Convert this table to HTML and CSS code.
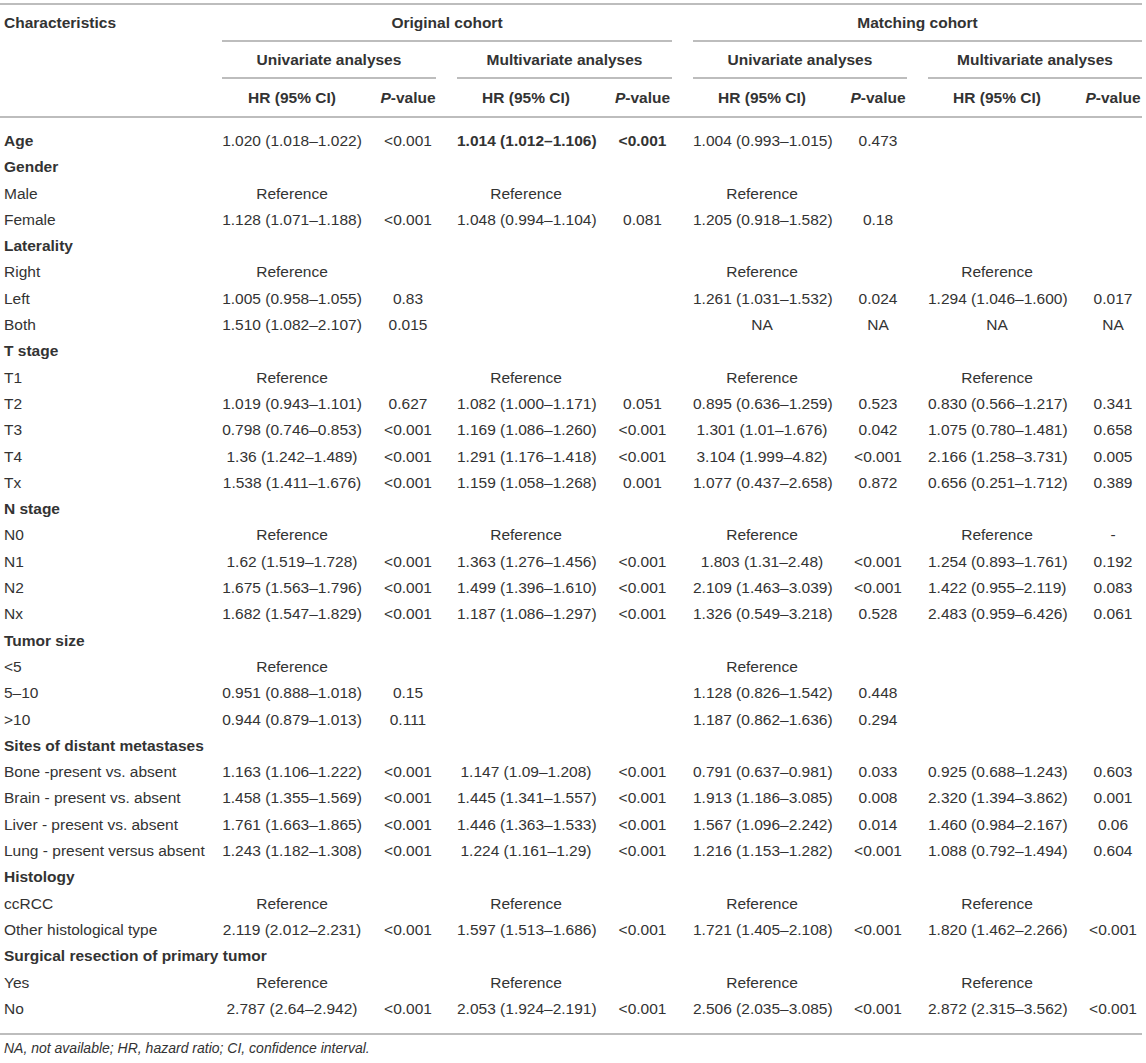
FILE: index.html
```html
<!DOCTYPE html>
<html>
<head>
<meta charset="utf-8">
<link rel="stylesheet" href="styles.css">
</head>
<body>
<div class="wrap">
<table class="tbl">
  <colgroup>
    <col class="c-label">
    <col class="c-hr1"><col class="c-p1"><col class="c-sp">
    <col class="c-hr2"><col class="c-p2"><col class="c-sp">
    <col class="c-hr3"><col class="c-p3"><col class="c-sp">
    <col class="c-hr4"><col class="c-p4">
  </colgroup>
  <thead>
    <tr class="h1">
      <th class="lbl line" rowspan="3">Characteristics</th>
      <th class="line" colspan="5">Original cohort</th>
      <th class="sp"></th>
      <th class="line" colspan="5">Matching cohort</th>
    </tr>
    <tr class="h2">
      <th class="line" colspan="2">Univariate analyses</th>
      <th class="sp"></th>
      <th class="line" colspan="2">Multivariate analyses</th>
      <th class="sp"></th>
      <th class="line" colspan="2">Univariate analyses</th>
      <th class="sp"></th>
      <th class="line" colspan="2">Multivariate analyses</th>
    </tr>
    <tr class="h3">
      <th class="line">HR (95% CI)</th><th class="line p"><i>P</i>-value</th><th class="line sp"></th>
      <th class="line">HR (95% CI)</th><th class="line p"><i>P</i>-value</th><th class="line sp"></th>
      <th class="line">HR (95% CI)</th><th class="line p"><i>P</i>-value</th><th class="line sp"></th>
      <th class="line">HR (95% CI)</th><th class="line p"><i>P</i>-value</th>
    </tr>
  </thead>
  <tbody>
    <tr class="first"><td class="lbl b">Age</td><td>1.020 (1.018–1.022)</td><td class="p">&lt;0.001</td><td></td><td class="b">1.014 (1.012–1.106)</td><td class="p b">&lt;0.001</td><td></td><td>1.004 (0.993–1.015)</td><td class="p">0.473</td><td></td><td></td><td class="p"></td></tr>
    <tr><td class="lbl b">Gender</td><td></td><td class="p"></td><td></td><td></td><td class="p"></td><td></td><td></td><td class="p"></td><td></td><td></td><td class="p"></td></tr>
    <tr><td class="lbl">Male</td><td>Reference</td><td class="p"></td><td></td><td>Reference</td><td class="p"></td><td></td><td>Reference</td><td class="p"></td><td></td><td></td><td class="p"></td></tr>
    <tr><td class="lbl">Female</td><td>1.128 (1.071–1.188)</td><td class="p">&lt;0.001</td><td></td><td>1.048 (0.994–1.104)</td><td class="p">0.081</td><td></td><td>1.205 (0.918–1.582)</td><td class="p">0.18</td><td></td><td></td><td class="p"></td></tr>
    <tr><td class="lbl b">Laterality</td><td></td><td class="p"></td><td></td><td></td><td class="p"></td><td></td><td></td><td class="p"></td><td></td><td></td><td class="p"></td></tr>
    <tr><td class="lbl">Right</td><td>Reference</td><td class="p"></td><td></td><td></td><td class="p"></td><td></td><td>Reference</td><td class="p"></td><td></td><td>Reference</td><td class="p"></td></tr>
    <tr><td class="lbl">Left</td><td>1.005 (0.958–1.055)</td><td class="p">0.83</td><td></td><td></td><td class="p"></td><td></td><td>1.261 (1.031–1.532)</td><td class="p">0.024</td><td></td><td>1.294 (1.046–1.600)</td><td class="p">0.017</td></tr>
    <tr><td class="lbl">Both</td><td>1.510 (1.082–2.107)</td><td class="p">0.015</td><td></td><td></td><td class="p"></td><td></td><td>NA</td><td class="p">NA</td><td></td><td>NA</td><td class="p">NA</td></tr>
    <tr><td class="lbl b">T stage</td><td></td><td class="p"></td><td></td><td></td><td class="p"></td><td></td><td></td><td class="p"></td><td></td><td></td><td class="p"></td></tr>
    <tr><td class="lbl">T1</td><td>Reference</td><td class="p"></td><td></td><td>Reference</td><td class="p"></td><td></td><td>Reference</td><td class="p"></td><td></td><td>Reference</td><td class="p"></td></tr>
    <tr><td class="lbl">T2</td><td>1.019 (0.943–1.101)</td><td class="p">0.627</td><td></td><td>1.082 (1.000–1.171)</td><td class="p">0.051</td><td></td><td>0.895 (0.636–1.259)</td><td class="p">0.523</td><td></td><td>0.830 (0.566–1.217)</td><td class="p">0.341</td></tr>
    <tr><td class="lbl">T3</td><td>0.798 (0.746–0.853)</td><td class="p">&lt;0.001</td><td></td><td>1.169 (1.086–1.260)</td><td class="p">&lt;0.001</td><td></td><td>1.301 (1.01–1.676)</td><td class="p">0.042</td><td></td><td>1.075 (0.780–1.481)</td><td class="p">0.658</td></tr>
    <tr><td class="lbl">T4</td><td>1.36 (1.242–1.489)</td><td class="p">&lt;0.001</td><td></td><td>1.291 (1.176–1.418)</td><td class="p">&lt;0.001</td><td></td><td>3.104 (1.999–4.82)</td><td class="p">&lt;0.001</td><td></td><td>2.166 (1.258–3.731)</td><td class="p">0.005</td></tr>
    <tr><td class="lbl">Tx</td><td>1.538 (1.411–1.676)</td><td class="p">&lt;0.001</td><td></td><td>1.159 (1.058–1.268)</td><td class="p">0.001</td><td></td><td>1.077 (0.437–2.658)</td><td class="p">0.872</td><td></td><td>0.656 (0.251–1.712)</td><td class="p">0.389</td></tr>
    <tr><td class="lbl b">N stage</td><td></td><td class="p"></td><td></td><td></td><td class="p"></td><td></td><td></td><td class="p"></td><td></td><td></td><td class="p"></td></tr>
    <tr><td class="lbl">N0</td><td>Reference</td><td class="p"></td><td></td><td>Reference</td><td class="p"></td><td></td><td>Reference</td><td class="p"></td><td></td><td>Reference</td><td class="p">-</td></tr>
    <tr><td class="lbl">N1</td><td>1.62 (1.519–1.728)</td><td class="p">&lt;0.001</td><td></td><td>1.363 (1.276–1.456)</td><td class="p">&lt;0.001</td><td></td><td>1.803 (1.31–2.48)</td><td class="p">&lt;0.001</td><td></td><td>1.254 (0.893–1.761)</td><td class="p">0.192</td></tr>
    <tr><td class="lbl">N2</td><td>1.675 (1.563–1.796)</td><td class="p">&lt;0.001</td><td></td><td>1.499 (1.396–1.610)</td><td class="p">&lt;0.001</td><td></td><td>2.109 (1.463–3.039)</td><td class="p">&lt;0.001</td><td></td><td>1.422 (0.955–2.119)</td><td class="p">0.083</td></tr>
    <tr><td class="lbl">Nx</td><td>1.682 (1.547–1.829)</td><td class="p">&lt;0.001</td><td></td><td>1.187 (1.086–1.297)</td><td class="p">&lt;0.001</td><td></td><td>1.326 (0.549–3.218)</td><td class="p">0.528</td><td></td><td>2.483 (0.959–6.426)</td><td class="p">0.061</td></tr>
    <tr><td class="lbl b">Tumor size</td><td></td><td class="p"></td><td></td><td></td><td class="p"></td><td></td><td></td><td class="p"></td><td></td><td></td><td class="p"></td></tr>
    <tr><td class="lbl">&lt;5</td><td>Reference</td><td class="p"></td><td></td><td></td><td class="p"></td><td></td><td>Reference</td><td class="p"></td><td></td><td></td><td class="p"></td></tr>
    <tr><td class="lbl">5–10</td><td>0.951 (0.888–1.018)</td><td class="p">0.15</td><td></td><td></td><td class="p"></td><td></td><td>1.128 (0.826–1.542)</td><td class="p">0.448</td><td></td><td></td><td class="p"></td></tr>
    <tr><td class="lbl">&gt;10</td><td>0.944 (0.879–1.013)</td><td class="p">0.111</td><td></td><td></td><td class="p"></td><td></td><td>1.187 (0.862–1.636)</td><td class="p">0.294</td><td></td><td></td><td class="p"></td></tr>
    <tr><td class="lbl b">Sites of distant metastases</td><td></td><td class="p"></td><td></td><td></td><td class="p"></td><td></td><td></td><td class="p"></td><td></td><td></td><td class="p"></td></tr>
    <tr><td class="lbl">Bone -present vs. absent</td><td>1.163 (1.106–1.222)</td><td class="p">&lt;0.001</td><td></td><td>1.147 (1.09–1.208)</td><td class="p">&lt;0.001</td><td></td><td>0.791 (0.637–0.981)</td><td class="p">0.033</td><td></td><td>0.925 (0.688–1.243)</td><td class="p">0.603</td></tr>
    <tr><td class="lbl">Brain - present vs. absent</td><td>1.458 (1.355–1.569)</td><td class="p">&lt;0.001</td><td></td><td>1.445 (1.341–1.557)</td><td class="p">&lt;0.001</td><td></td><td>1.913 (1.186–3.085)</td><td class="p">0.008</td><td></td><td>2.320 (1.394–3.862)</td><td class="p">0.001</td></tr>
    <tr><td class="lbl">Liver - present vs. absent</td><td>1.761 (1.663–1.865)</td><td class="p">&lt;0.001</td><td></td><td>1.446 (1.363–1.533)</td><td class="p">&lt;0.001</td><td></td><td>1.567 (1.096–2.242)</td><td class="p">0.014</td><td></td><td>1.460 (0.984–2.167)</td><td class="p">0.06</td></tr>
    <tr><td class="lbl">Lung - present versus absent</td><td>1.243 (1.182–1.308)</td><td class="p">&lt;0.001</td><td></td><td>1.224 (1.161–1.29)</td><td class="p">&lt;0.001</td><td></td><td>1.216 (1.153–1.282)</td><td class="p">&lt;0.001</td><td></td><td>1.088 (0.792–1.494)</td><td class="p">0.604</td></tr>
    <tr><td class="lbl b">Histology</td><td></td><td class="p"></td><td></td><td></td><td class="p"></td><td></td><td></td><td class="p"></td><td></td><td></td><td class="p"></td></tr>
    <tr><td class="lbl">ccRCC</td><td>Reference</td><td class="p"></td><td></td><td>Reference</td><td class="p"></td><td></td><td>Reference</td><td class="p"></td><td></td><td>Reference</td><td class="p"></td></tr>
    <tr><td class="lbl">Other histological type</td><td>2.119 (2.012–2.231)</td><td class="p">&lt;0.001</td><td></td><td>1.597 (1.513–1.686)</td><td class="p">&lt;0.001</td><td></td><td>1.721 (1.405–2.108)</td><td class="p">&lt;0.001</td><td></td><td>1.820 (1.462–2.266)</td><td class="p">&lt;0.001</td></tr>
    <tr><td class="lbl b">Surgical resection of primary tumor</td><td></td><td class="p"></td><td></td><td></td><td class="p"></td><td></td><td></td><td class="p"></td><td></td><td></td><td class="p"></td></tr>
    <tr><td class="lbl">Yes</td><td>Reference</td><td class="p"></td><td></td><td>Reference</td><td class="p"></td><td></td><td>Reference</td><td class="p"></td><td></td><td>Reference</td><td class="p"></td></tr>
    <tr class="last"><td class="lbl">No</td><td>2.787 (2.64–2.942)</td><td class="p">&lt;0.001</td><td></td><td>2.053 (1.924–2.191)</td><td class="p">&lt;0.001</td><td></td><td>2.506 (2.035–3.085)</td><td class="p">&lt;0.001</td><td></td><td>2.872 (2.315–3.562)</td><td class="p">&lt;0.001</td></tr>
  </tbody>
</table>
<p class="note">NA, not available; HR, hazard ratio; CI, confidence interval.</p>
</div>
</body>
</html>
```

FILE: styles.css
```css
html, body {
  margin: 0;
  padding: 0;
  background: #ffffff;
}

.wrap {
  padding-top: 3px;
  font-family: "Liberation Sans", Arial, sans-serif;
  color: #333333;
}

.tbl {
  width: 1142px;
  table-layout: fixed;
  border-collapse: separate;
  border-spacing: 0;
  border-top: 2px solid #bdbdbd;
  border-bottom: 2px solid #bdbdbd;
  font-size: 15.5px;
}

.c-label { width: 222px; }
.c-hr1 { width: 140px; }
.c-p1 { width: 74px; }
.c-sp { width: 21px; }
.c-hr2 { width: 138px; }
.c-p2 { width: 77px; }
.c-hr3 { width: 138px; }
.c-p3 { width: 76px; }
.c-hr4 { width: 138px; }
.c-p4 { width: 76px; }

.tbl th,
.tbl td {
  padding: 0;
  text-align: center;
  white-space: nowrap;
  vertical-align: middle;
}

.tbl th {
  font-weight: bold;
  height: 35px;
  line-height: 35px;
}

.tbl .h3 th {
  height: 37px;
  line-height: 37px;
}

.tbl th.lbl {
  vertical-align: top;
  line-height: 35px;
}

.tbl th.line {
  border-bottom: 2px solid #bdbdbd;
}

.tbl .lbl {
  text-align: left;
  padding-left: 4px;
}

.tbl .p {
  padding-left: 18px;
}

.tbl col.c-p1 + col {}

.tbl td {
  height: 26.3px;
  line-height: 26.3px;
}

.tbl tr.first td {
  padding-top: 10px;
}

.tbl tr.first td.p {
  padding-top: 10px;
}

.tbl tr.last td {
  padding-bottom: 11px;
}

.tbl .b {
  font-weight: bold;
}

.note {
  margin: 3px 0 0 4px;
  font-size: 14px;
  line-height: 20px;
  font-style: italic;
}
```
